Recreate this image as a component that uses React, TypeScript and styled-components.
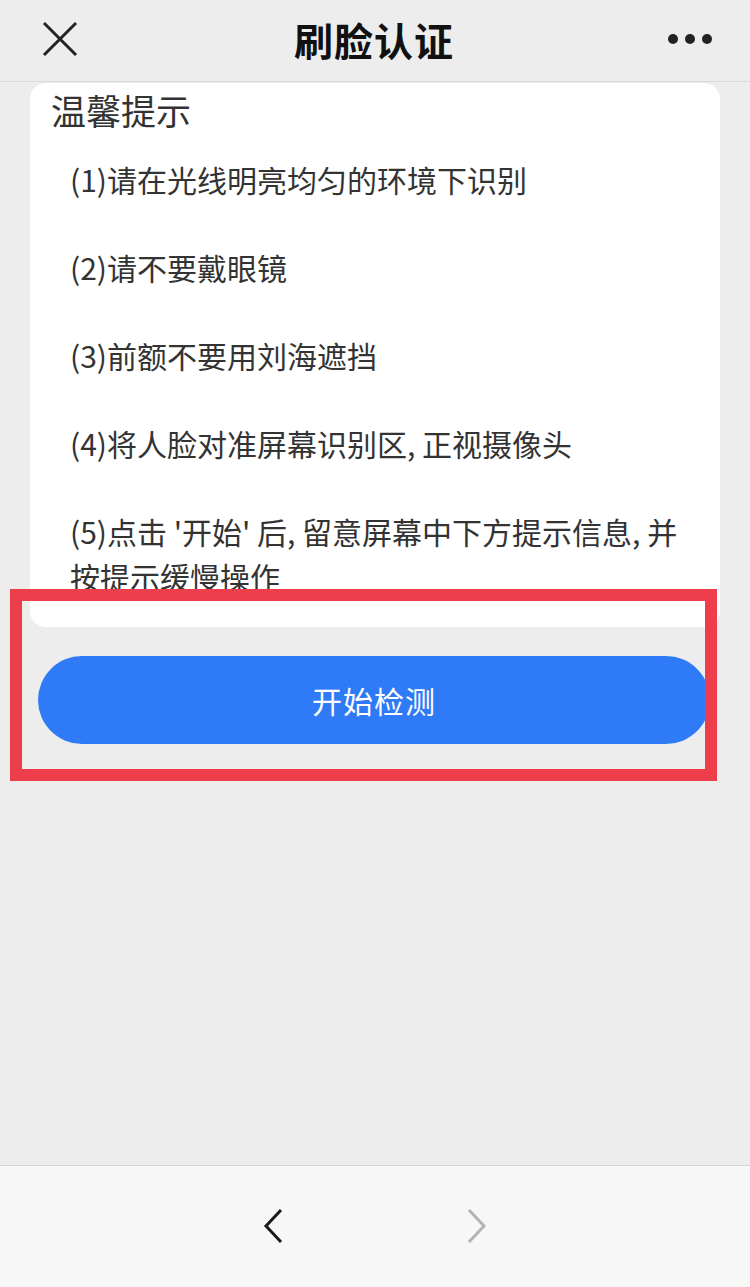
import React, { FC } from 'react'
import styled, { createGlobalStyle } from 'styled-components'

const GlobalStyle = createGlobalStyle`
  html, body {
    margin: 0;
    padding: 0;
    background: #ededed;
    font-family: 'Noto Sans CJK SC', 'Noto Sans', sans-serif;
  }
  * {
    box-sizing: border-box;
  }
`

const tips = [
  ['(1)请在光线明亮均匀的环境下识别'],
  ['(2)请不要戴眼镜'],
  ['(3)前额不要用刘海遮挡'],
  ['(4)将人脸对准屏幕识别区, 正视摄像头'],
  ["(5)点击 '开始' 后, 留意屏幕中下方提示信息, 并", '按提示缓慢操作'],
]

const App: FC = () => {
  return (
    <Page>
      <GlobalStyle />
      <Header>
        <HeaderSide>
          <svg width="36" height="36" viewBox="0 0 36 36">
            <path d="M2 2 L34 34 M34 2 L2 34" stroke="#222" strokeWidth="3" fill="none" />
          </svg>
        </HeaderSide>
        <Title>刷脸认证</Title>
        <HeaderSide align="end">
          <Dots>
            <Dot />
            <Dot />
            <Dot />
          </Dots>
        </HeaderSide>
      </Header>

      <Body>
        <Card>
          <CardTitle>温馨提示</CardTitle>
          <TipList>
            {tips.map((lines, i) => (
              <Tip key={'tip-' + i}>
                {lines.map((line, j) => (
                  <TipLine key={j}>{line}</TipLine>
                ))}
              </Tip>
            ))}
          </TipList>
        </Card>

        <Actions>
          <StartButton>开始检测</StartButton>
        </Actions>

        <Highlight />
      </Body>

      <Spacer />

      <BottomBar>
        <NavButton>
          <svg width="22" height="36" viewBox="0 0 22 36">
            <path d="M18 2 L3 18 L18 34" stroke="#1a1a1a" strokeWidth="3" fill="none" />
          </svg>
        </NavButton>
        <NavButton>
          <svg width="22" height="36" viewBox="0 0 22 36">
            <path d="M4 2 L19 18 L4 34" stroke="#b3b3b3" strokeWidth="3" fill="none" />
          </svg>
        </NavButton>
      </BottomBar>
    </Page>
  )
}

export default App

const Page = styled.div`
  position: relative;
  display: flex;
  flex-direction: column;
  width: 750px;
  min-height: 1287px;
  background: #ededed;
`

const Header = styled.div`
  display: grid;
  grid-template-columns: 1fr auto 1fr;
  align-items: center;
  height: 82px;
  padding: 0 38px 4px 42px;
  border-bottom: 1px solid #d9d9d9;
`

const HeaderSide = styled.div<{ align?: 'end' }>`
  display: flex;
  justify-content: ${({ align }) => (align === 'end' ? 'flex-end' : 'flex-start')};
  align-items: center;
`

const Title = styled.div`
  font-size: 39px;
  font-weight: 700;
  color: #111;
  letter-spacing: 1px;
  margin-right: 6px;
`

const Dots = styled.div`
  display: flex;
  gap: 7px;
`

const Dot = styled.span`
  width: 10px;
  height: 10px;
  border-radius: 50%;
  background: #222;
`

const Body = styled.div`
  position: relative;
  display: flex;
  flex-direction: column;
`

const Card = styled.div`
  margin: 1px 30px 0 30px;
  height: 544px;
  padding: 5px 0 30px 0;
  background: #fff;
  border-radius: 16px;
  display: flex;
  flex-direction: column;
`

const CardTitle = styled.div`
  padding-left: 21px;
  font-size: 35px;
  line-height: 44px;
  color: #333;
`

const TipList = styled.div`
  flex: 1;
  overflow: hidden;
  padding: 25px 0 0 40px;
  display: flex;
  flex-direction: column;
  gap: 43px;
`

const Tip = styled.div`
  display: flex;
  flex-direction: column;
`

const TipLine = styled.div`
  font-size: 30px;
  line-height: 45px;
  color: #333;
  white-space: nowrap;
`

const Actions = styled.div`
  padding: 29px 40px 0 38px;
`

const StartButton = styled.button`
  width: 100%;
  height: 88px;
  border: none;
  border-radius: 44px;
  background: #2f7af6;
  color: #fff;
  font-family: 'Noto Sans CJK SC', sans-serif;
  font-size: 30px;
  letter-spacing: 1px;
`

const Highlight = styled.div`
  position: absolute;
  left: 10px;
  top: 507px;
  width: 707px;
  height: 192px;
  border: 12px solid #ef3e4b;
  pointer-events: none;
`

const Spacer = styled.div`
  flex: 1;
`

const BottomBar = styled.div`
  height: 122px;
  background: #f7f7f7;
  border-top: 1px solid #d6d6d6;
  display: flex;
  justify-content: center;
  align-items: center;
  gap: 180px;
  padding-bottom: 2px;
`

const NavButton = styled.div`
  display: flex;
  align-items: center;
  justify-content: center;
  width: 22px;
`
